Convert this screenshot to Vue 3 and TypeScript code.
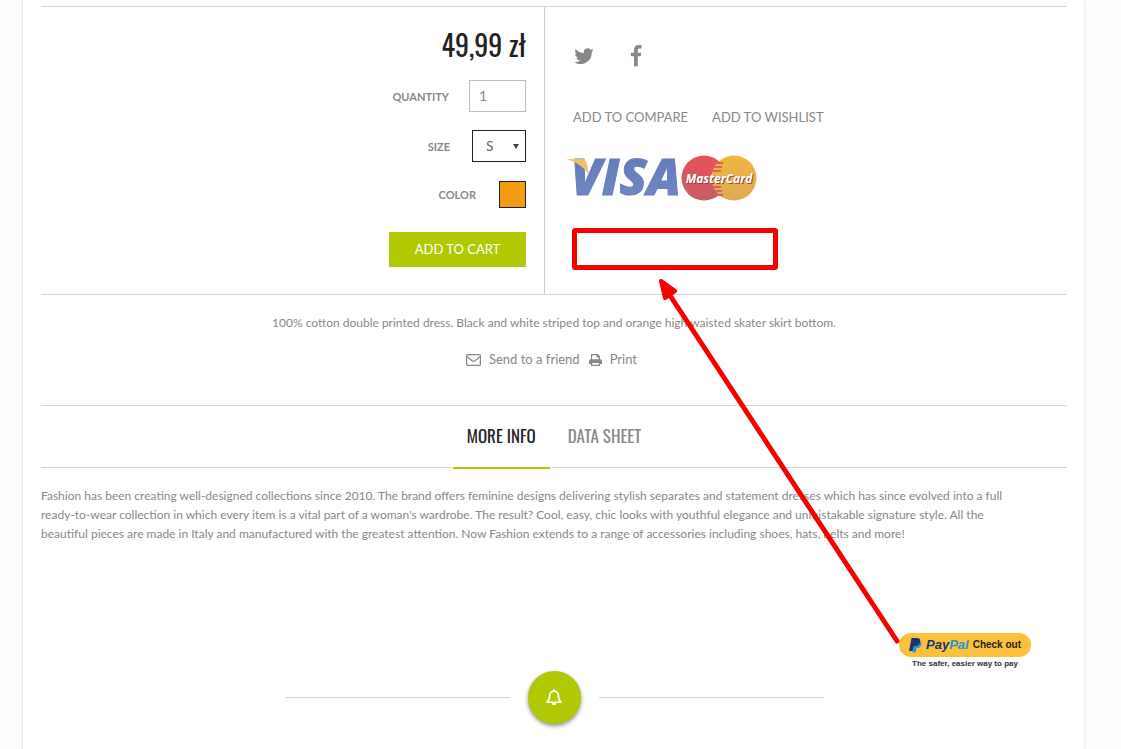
<script setup lang="ts">
import { ref } from 'vue'

const quantity = ref('1')
const size = ref('S')
const sizes = ['S', 'M', 'L']
const tabs = ['More info', 'Data sheet']
const activeTab = ref(0)
</script>

<template>
  <div class="shell">
    <main class="page">
      <section class="product">
        <form class="buy" @submit.prevent>
          <p class="price">49,99 zł</p>
          <div class="field">
            <label for="quantity">Quantity</label>
            <input id="quantity" v-model="quantity" class="quantity" type="text" />
          </div>
          <div class="field">
            <label for="size">Size</label>
            <span class="select">
              <select id="size" v-model="size">
                <option v-for="s in sizes" :key="s">{{ s }}</option>
              </select>
              <svg class="caret" viewBox="0 0 6 5" aria-hidden="true"><path d="M0 0h6L3 5z" /></svg>
            </span>
          </div>
          <div class="field color">
            <span id="color-label">Color</span>
            <button type="button" class="swatch" aria-labelledby="color-label"></button>
          </div>
          <button type="submit" class="cart">Add to cart</button>
        </form>

        <div class="aside">
          <div class="social">
            <a href="#" aria-label="Twitter">
              <svg width="20" height="16" viewBox="0 0 20 16">
                <path d="M19.6 2.3c-.7.3-1.4.5-2.2.6.8-.5 1.4-1.2 1.7-2.1-.8.4-1.6.8-2.5.9A3.96 3.96 0 0 0 9.8 5.3 11.2 11.2 0 0 1 1.7 1.1c-1 1.8-.5 4 1.2 5.2-.6 0-1.2-.2-1.8-.5 0 1.9 1.3 3.5 3.2 3.9-.6.2-1.2.2-1.8.1.5 1.6 2 2.7 3.7 2.7A8 8 0 0 1 .4 14.2 11.2 11.2 0 0 0 17.7 4.300c.7-.5 1.400-1.200 1.900-2z" />
              </svg>
            </a>
            <a href="#" aria-label="Facebook">
              <svg width="12" height="22" viewBox="0 0 12 22">
                <path d="M11.5.2v3.400H9.600c-1.500 0-1.800.7-1.800 1.800v2.300h3.500l-.5 3.600h-3v10H4v-10H.9V7.700H4V5C4 1.900 5.900 0 8.800 0c1.300 0 2.400.1 2.700.2z" />
              </svg>
            </a>
          </div>
          <div class="lists">
            <a href="#">Add to Compare</a>
            <a href="#">Add to Wishlist</a>
          </div>
          <svg class="cards" width="198" height="50" viewBox="0 0 198 50" role="img" aria-label="Visa and MasterCard">
            <defs>
              <linearGradient id="visa" x1="0" y1="0" x2="0" y2="1">
                <stop offset="0" stop-color="#5f78b5" />
                <stop offset="1" stop-color="#7688c8" />
              </linearGradient>
              <linearGradient id="red" x1="0" y1="0" x2="0" y2="1">
                <stop offset="0" stop-color="#e8505a" />
                <stop offset="1" stop-color="#c95c66" />
              </linearGradient>
              <linearGradient id="gold" x1="0" y1="0" x2="0" y2="1">
                <stop offset="0" stop-color="#efb63f" />
                <stop offset="1" stop-color="#dfa955" />
              </linearGradient>
            </defs>
            <text class="visa" x="5" y="42" fill="url(#visa)" stroke="#6b80bf">VISA</text>
            <path d="M0 6h15c4 0 5 2 6 5l2 11C19 15 11 9 0 6z" fill="#eec268" />
            <circle cx="138" cy="25" r="22.5" fill="url(#red)" />
            <circle cx="168" cy="25" r="22.5" fill="url(#gold)" />
            <path d="M148 10h9M147 14h9M146 18h9M147 34h8M148 38h8M150 42h7" stroke="#d9655a" stroke-width="2" />
            <text class="master shade" x="154" y="31">MasterCard</text>
            <text class="master" x="153" y="30">MasterCard</text>
          </svg>
          <div class="slot"></div>
        </div>
      </section>

      <section class="summary">
        <p>100% cotton double printed dress. Black and white striped top and orange high waisted skater skirt bottom.</p>
        <div class="actions">
          <a href="#">
            <svg width="15" height="12" viewBox="0 0 15 12" fill="none" stroke="#888" stroke-width="1.2">
              <rect x=".6" y=".6" width="13.8" height="10.8" rx="1" />
              <path d="M.8 2.500l5.200 4.200q1.500 1.200 3 0l5.200-4.200" />
            </svg>
            Send to a friend
          </a>
          <a href="#">
            <svg width="13" height="12" viewBox="0 0 13 12">
              <path fill="none" stroke="#888" stroke-width="1.2" d="M2.600 6V.6h6l1.800 1.800V6M8.300.6v2.200h2.200" />
              <path fill="#888" d="M1.500 5.200h10q1.500 0 1.500 1.500V10h-13V6.700q0-1.500 1.500-1.500z" />
              <path fill="#fff" stroke="#888" stroke-width="1.2" d="M2.600 8.400h7.800v3H2.600z" />
            </svg>
            Print
          </a>
        </div>
      </section>

      <nav class="tabs">
        <button
          v-for="(tab, i) in tabs"
          :key="tab"
          type="button"
          :class="{ active: i === activeTab }"
          @click="activeTab = i"
        >{{ tab }}</button>
      </nav>

      <p class="info">
        Fashion has been creating well-designed collections since 2010. The brand offers feminine designs delivering stylish separates and statement dresses which has since evolved into a full ready-to-wear collection in which every item is a vital part of a woman's wardrobe. The result? Cool, easy, chic looks with youthful elegance and unmistakable signature style. All the beautiful pieces are made in Italy and manufactured with the greatest attention. Now Fashion extends to a range of accessories including shoes, hats, belts and more!
      </p>

      <div class="checkout">
        <button type="button" class="paypal">
          <svg width="13" height="15" viewBox="0 0 13 15" aria-hidden="true">
            <path fill="#2497d6" d="M4.500 3h6.300c2 1 2 3 1.300 4.500-.8 1.900-2.300 2.500-4.500 2.500l-.8 4.500H3.500z" />
            <path fill="#17366f" d="M2.500 0h5.200c3 0 4 1.500 3.400 4C10.500 7 8.500 8 5.800 8H4.500l-.9 5H0z" />
          </svg>
          <span class="brand">Pay<span>Pal</span></span>
          <span>Check out</span>
        </button>
        <small>The safer, easier way to pay</small>
      </div>

      <div class="divider">
        <span class="rule"></span>
        <button type="button" class="bell" aria-label="Notifications">
          <svg width="16" height="17" viewBox="0 0 16 17" fill="none" stroke="#fff" stroke-width="1.6">
            <path d="M1 13.200c2-1.600 2.600-3.500 2.600-6.200C3.600 4 5.300 2.300 8 2.300S12.400 4 12.400 7c0 2.700.6 4.600 2.600 6.200z" stroke-linejoin="round" />
            <path d="M8 .3v2" />
            <path d="M5.800 14h4.400a2.200 2.200 0 0 1-4.400 0z" fill="#fff" stroke="none" />
          </svg>
        </button>
        <span class="rule"></span>
      </div>

      <svg class="arrow" width="250" height="376" viewBox="0 0 250 376" aria-hidden="true">
        <path d="M241 365L15 21" stroke="#f90000" stroke-width="5" stroke-linecap="round" />
        <path d="M5 5L19 15L9 22z" fill="#f90000" stroke="#f90000" stroke-width="4" stroke-linejoin="round" />
      </svg>
    </main>
  </div>
</template>

<style>
html,
body {
  margin: 0;
  background: #fefefe;
}
</style>

<style scoped>
* {
  box-sizing: border-box;
}

.shell {
  padding: 0 14px 0 0;
  overflow: hidden;
  color: #888;
  font: 13px/19px Lato, "Open Sans", sans-serif;
}

.page {
  position: relative;
  max-width: 1063px;
  min-height: 100vh;
  margin: 0 auto;
  padding: 6px 17px 23px 18px;
  background: #fff;
  border: solid #ececec;
  border-width: 0 1px;
  box-shadow: 0 0 4px rgba(0, 0, 0, 0.06);
}

p {
  margin: 0;
}

a {
  color: inherit;
  text-decoration: none;
}

button,
input,
select {
  margin: 0;
  font: inherit;
}

button {
  padding: 0;
  border: 0;
  cursor: pointer;
}

svg {
  display: block;
  flex: none;
}

.product {
  display: grid;
  grid-template-columns: 504px 1fr;
  border-top: 1px solid #d6d6d6;
  border-bottom: 1px solid #d6d6d6;
}

.buy {
  display: flex;
  flex-direction: column;
  align-items: flex-end;
  padding: 20px 18px 27px 0;
  border-right: 1px solid #ccc;
}

.price {
  margin-bottom: 17px;
  color: #222;
  font: 28px/36px Oswald, "Liberation Sans Narrow", sans-serif;
}

.field {
  display: flex;
  align-items: center;
  gap: 20px;
  margin-bottom: 18px;
  font-size: 11px;
  font-weight: 700;
  text-transform: uppercase;
}

.color {
  gap: 23px;
  margin: 1px 0 24px;
}

.quantity {
  width: 57px;
  height: 32px;
  padding: 0 9px 2px;
  border: 1px solid #bbbec1;
  border-radius: 0;
  background: #fff;
  color: #888;
  font-size: 14px;
  font-weight: 400;
}

.select {
  position: relative;
  margin-left: 2px;
}

.select select {
  display: block;
  width: 54px;
  height: 32px;
  padding: 0 13px 2px;
  appearance: none;
  border: 1px solid #222;
  border-radius: 0;
  background: #fff;
  color: #666;
  font-size: 14px;
  font-weight: 400;
}

.caret {
  position: absolute;
  top: 14px;
  right: 7px;
  width: 6px;
  height: 5px;
  fill: #444;
}

.swatch {
  width: 27px;
  height: 27px;
  border: 1px solid #222;
  background: #f39c11;
}

.cart {
  width: 137px;
  height: 35px;
  background: #b1c903;
  color: #fff;
  font-size: 13px;
  text-transform: uppercase;
}

.aside {
  display: flex;
  flex-direction: column;
  align-items: flex-start;
  padding: 38px 0 24px 27px;
}

.social {
  display: flex;
  align-items: center;
  gap: 36px;
  height: 22px;
  margin: 0 0 41px 2px;
  fill: #888;
}

.lists {
  display: flex;
  gap: 24px;
  margin-left: 1px;
  text-transform: uppercase;
}

.cards {
  margin: 26px 0 25px -6px;
}

.visa {
  font: italic 800 50px "Open Sans", sans-serif;
}

.master {
  fill: #fff;
  font: italic 700 12px "Open Sans", sans-serif;
  text-anchor: middle;
}

.shade {
  fill: #8d4a45;
}

.slot {
  width: 206px;
  height: 42px;
  border: 5px solid #f90000;
  border-radius: 3px;
}

.summary {
  padding: 18px 0 36px;
  text-align: center;
}

.summary p,
.info {
  font-size: 12px;
}

.actions {
  display: flex;
  justify-content: center;
  gap: 9px;
  margin: 18px 5px 0 0;
}

.actions a {
  display: flex;
  align-items: center;
  gap: 8px;
}

.tabs {
  display: flex;
  justify-content: center;
  gap: 4px;
  height: 63px;
  border: solid #d6d6d6;
  border-width: 1px 0;
}

.tabs button {
  height: 63px;
  padding: 0 14px 2px;
  border-bottom: 2px solid transparent;
  background: none;
  color: #888;
  font: 17px/24px Oswald, "Liberation Sans Narrow", sans-serif;
  text-transform: uppercase;
}

.tabs .active {
  border-color: #b1c903;
  color: #222;
}

.info {
  max-width: 976px;
  padding-top: 18px;
}

.checkout {
  display: flex;
  flex-direction: column;
  align-items: center;
  width: 132px;
  margin: 90px 36px 0 auto;
}

.paypal {
  display: flex;
  align-items: center;
  justify-content: center;
  gap: 4px;
  width: 132px;
  height: 24px;
  border-radius: 12px;
  background: #fcc13b;
  color: #222;
  font: 700 10px/24px "Liberation Sans", Arial, sans-serif;
}

.brand {
  color: #17366f;
  font-size: 13px;
  font-style: italic;
}

.brand span {
  color: #2497d6;
}

.checkout small {
  color: #333;
  font: 700 8px/14px "Liberation Sans", Arial, sans-serif;
  white-space: nowrap;
}

.divider {
  display: flex;
  align-items: center;
  justify-content: center;
  gap: 18px;
}

.rule {
  width: 225px;
  height: 1px;
  background: #d6d6d6;
}

.bell {
  display: grid;
  place-items: center;
  width: 53px;
  height: 53px;
  border-radius: 50%;
  background: #b1c903;
  box-shadow: 0 2px 4px rgba(0, 0, 0, 0.45);
}

.arrow {
  position: absolute;
  top: 276px;
  left: 633px;
  fill: none;
  pointer-events: none;
}
</style>
